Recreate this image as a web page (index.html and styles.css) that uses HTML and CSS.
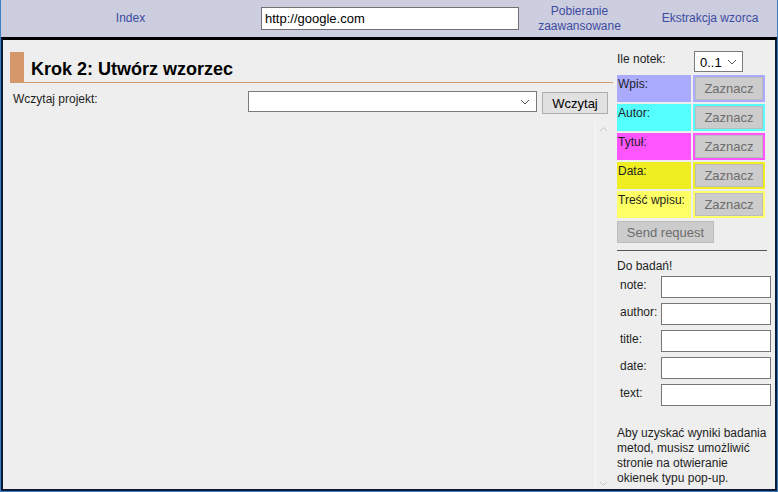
FILE: index.html
```html
<!DOCTYPE html>
<html lang="pl">
<head>
<meta charset="utf-8">
<title>Krok 2: Utwórz wzorzec</title>
<link rel="stylesheet" href="styles.css">
</head>
<body>
<div class="frame">
  <div class="topbar">
    <div class="nav-cell"><a class="nav-link" href="#">Index</a></div>
    <div class="nav-cell"><input class="url" type="text" value="http://google.com"></div>
    <div class="nav-cell"><a class="nav-link" href="#">Pobieranie<br>zaawansowane</a></div>
    <div class="nav-cell"><a class="nav-link" href="#">Ekstrakcja wzorca</a></div>
  </div>
  <div class="main">
    <div class="left">
      <div class="heading">
        <span class="heading-bar"></span>
        <h1 class="heading-text">Krok 2: Utwórz wzorzec</h1>
      </div>
      <div class="load-row">
        <span class="load-label">Wczytaj projekt:</span>
        <div class="select wide"><svg class="chev" width="10" height="6" viewBox="0 0 10 6"><path d="M1 1l4 4 4-4" fill="none" stroke="#555" stroke-width="1"/></svg></div>
        <button class="btn">Wczytaj</button>
      </div>
      <div class="scroll-area">
        <div class="canvas"></div>
        <div class="scrollbar">
          <svg width="9" height="6" viewBox="0 0 9 6"><path d="M1 5l3.5-3.5L8 5" fill="none" stroke="#c4c4c4" stroke-width="1"/></svg>
          <svg width="9" height="6" viewBox="0 0 9 6"><path d="M1 1l3.5 3.5L8 1" fill="none" stroke="#c4c4c4" stroke-width="1"/></svg>
        </div>
      </div>
    </div>
    <div class="right">
      <div class="count-row">
        <span>Ile notek:</span>
        <div class="select small"><span>0..1</span><svg class="chev" width="10" height="6" viewBox="0 0 10 6"><path d="M1 1l4 4 4-4" fill="none" stroke="#555" stroke-width="1"/></svg></div>
      </div>
      <table class="marks">
        <tr class="c-wpis"><td class="mark-label">Wpis:</td><td class="mark-btn"><button class="btn dis">Zaznacz</button></td></tr>
        <tr class="c-autor"><td class="mark-label">Autor:</td><td class="mark-btn"><button class="btn dis">Zaznacz</button></td></tr>
        <tr class="c-tytul"><td class="mark-label">Tytuł:</td><td class="mark-btn"><button class="btn dis">Zaznacz</button></td></tr>
        <tr class="c-data"><td class="mark-label">Data:</td><td class="mark-btn"><button class="btn dis">Zaznacz</button></td></tr>
        <tr class="c-tresc"><td class="mark-label">Treść wpisu:</td><td class="mark-btn"><button class="btn dis">Zaznacz</button></td></tr>
      </table>
      <button class="btn dis send">Send request</button>
      <hr class="sep">
      <div class="research-title">Do badań!</div>
      <table class="research">
        <tr><td class="r-label">note:</td><td><input class="r-input" type="text"></td></tr>
        <tr><td class="r-label">author:</td><td><input class="r-input" type="text"></td></tr>
        <tr><td class="r-label">title:</td><td><input class="r-input" type="text"></td></tr>
        <tr><td class="r-label">date:</td><td><input class="r-input" type="text"></td></tr>
        <tr><td class="r-label">text:</td><td><input class="r-input" type="text"></td></tr>
      </table>
      <p class="note">Aby uzyskać wyniki badania metod, musisz umożliwić stronie na otwieranie okienek typu pop-up.</p>
    </div>
  </div>
</div>
</body>
</html>
```

FILE: styles.css
```css
* { box-sizing: border-box; }
html, body { margin: 0; padding: 0; }
body {
  font-family: "Liberation Sans", Arial, sans-serif;
  font-size: 12px;
  color: #1e1e1e;
  background: #eeeeee;
}
.frame {
  width: 778px;
  height: 492px;
  border: 1px solid #3a7ec4;
  border-top: 0;
  display: flex;
  flex-direction: column;
  background: #cdcde0;
}
.topbar {
  height: 37px;
  display: grid;
  grid-template-columns: 259px 259px 121px 1fr;
  align-items: center;
  background: #cdcde0;
}
.nav-cell {
  text-align: center;
  display: flex;
  justify-content: center;
  align-items: center;
}
.nav-cell:nth-child(2) { justify-content: flex-start; padding-left: 1px; }
.nav-cell:nth-child(4) { padding-left: 3px; }
.nav-link {
  color: #3b4c9e;
  text-decoration: none;
  font-size: 12px;
  line-height: 15px;
}
.url {
  width: 259px;
  height: 23px;
  border: 1px solid #707070;
  background: #fff;
  font-family: "Liberation Sans", Arial, sans-serif;
  font-size: 13px;
  padding: 0 3px;
  color: #000;
}
.main {
  flex: 1;
  display: flex;
  background: #eeeeee;
  border: 2px solid #0c1a36;
  border-top: 3px solid #000;
  min-height: 0;
}
.left {
  width: 609px;
  display: flex;
  flex-direction: column;
}
.heading {
  margin: 12px 0 0 7px;
  width: 603px;
  height: 31px;
  display: flex;
  border-bottom: 1px solid #d49a6a;
}
.heading-bar {
  width: 14px;
  height: 30px;
  background: #d5986a;
}
.heading-text {
  margin: 0 0 0 7px;
  font-size: 18px;
  font-weight: bold;
  color: #000;
  line-height: 30px;
  padding-top: 2px;
}
.load-row {
  display: flex;
  align-items: flex-start;
  margin-top: 8px;
  padding-left: 10px;
  height: 30px;
}
.load-label {
  width: 235px;
  padding-top: 1px;
}
.select {
  position: relative;
  height: 21px;
  border: 1px solid #7a7a7a;
  background: #fff;
}
.select.wide { width: 289px; }
.chev { position: absolute; right: 6px; top: 7px; }
.btn {
  font-family: "Liberation Sans", Arial, sans-serif;
  font-size: 13px;
  background: #e1e1e1;
  border: 1px solid #adadad;
  color: #000;
  padding: 0;
}
.load-row .btn {
  margin-left: 5px;
  margin-top: 1px;
  width: 66px;
  height: 22px;
}
.scroll-area {
  flex: 1;
  display: flex;
  min-height: 0;
}
.canvas { flex: 1; }
.scrollbar {
  width: 16px;
  margin-right: 1px;
  border-left: 1px solid #f6f6f6;
  display: flex;
  flex-direction: column;
  justify-content: space-between;
  align-items: center;
  padding: 5px 0 2px;
}
.right {
  flex: 1;
  padding: 9px 0 0 5px;
}
.count-row {
  display: flex;
  align-items: flex-start;
  height: 24px;
}
.count-row > span { width: 77px; padding-top: 3px; }
.select.small {
  width: 49px;
  height: 21px;
  margin-top: 2px;
  padding: 3px 0 0 5px;
  font-size: 13px;
  color: #000;
}
.select.small .chev { top: 7px; right: 5px; }
.marks {
  border-collapse: separate;
  border-spacing: 2px;
  margin: 0 0 0 -2px;
}
.marks td { padding: 0; height: 27px; }
.mark-label {
  width: 74px;
  vertical-align: top;
  padding: 2px 0 0 1px !important;
  white-space: nowrap;
}
.mark-btn {
  width: 72px;
  padding: 2px !important;
  vertical-align: top;
}
.btn.dis {
  background: #cccccc;
  border: 1px solid #bcbcbc;
  color: #6d6d6d;
}
.mark-btn .btn { width: 68px; height: 23px; }
.c-wpis td { background: #aaabff; }
.c-autor td { background: #55ffff; }
.c-tytul td { background: #ff55ff; }
.c-data td { background: #eeee22; }
.c-tresc td { background: #ffff66; }
.send {
  display: block;
  width: 97px;
  height: 22px;
  margin: 1px 0 0 0;
}
.sep {
  border: 0;
  border-top: 1px solid #555;
  width: 150px;
  margin: 7px 0 8px 0;
}
.research-title { line-height: 14px; }
.research {
  border-collapse: separate;
  border-spacing: 2px 5px;
  margin: -2px 0 0 0;
}
.research td { padding: 0; }
.r-label {
  width: 40px;
  vertical-align: top;
  padding: 2px 0 0 1px !important;
}
.r-input {
  width: 110px;
  height: 22px;
  border: 1px solid #767676;
  background: #fff;
  display: block;
  margin: 0;
}
.note {
  margin: 15px 0 0 0;
  width: 150px;
  line-height: 15px;
}
```
